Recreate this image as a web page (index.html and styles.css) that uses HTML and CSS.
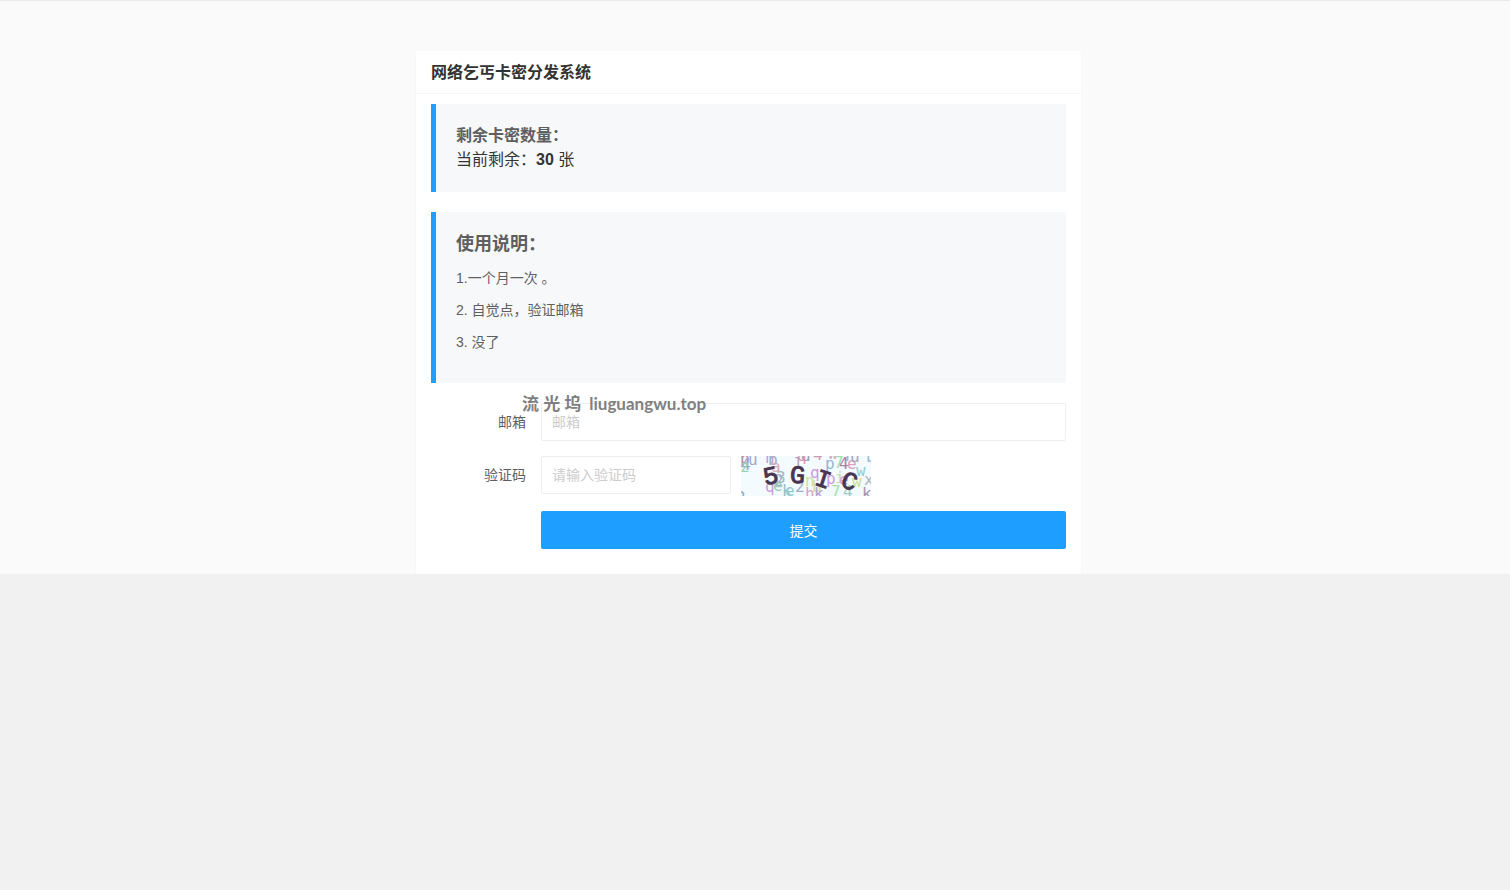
FILE: index.html
```
<!DOCTYPE html>
<html lang="zh-CN">
<head>
    <meta charset="UTF-8">
    <meta name="viewport" content="width=device-width, initial-scale=1.0">
    <title>网络乞丐卡密分发系统</title>
    <link rel="stylesheet" href="styles.css">
</head>
<body>
    <div class="page">
        <div class="card">
            <h1 class="card-header">网络乞丐卡密分发系统</h1>
            <div class="card-body">
                <!-- 剩余数量 -->
                <div class="quote">
                    <h2 class="quote-label">剩余卡密数量：</h2>
                    <div class="count">当前剩余：<b>30</b> 张</div>
                </div>

                <!-- 使用说明 -->
                <div class="quote">
                    <h2 class="quote-title">使用说明：</h2>
                    <p>1.一个月一次 。</p>
                    <p>2. 自觉点，验证邮箱</p>
                    <p>3. 没了</p>
                </div>

                <form class="form">
                    <div class="watermark"><span>流 光 坞</span><span>liuguangwu.top</span></div>
                    <div class="form-item">
                        <label class="form-label" for="email">邮箱</label>
                        <input class="input" type="text" id="email" name="email" placeholder="邮箱">
                    </div>
                    <div class="form-item">
                        <label class="form-label" for="captcha">验证码</label>
                        <input class="input input-captcha" type="text" id="captcha" name="captcha" placeholder="请输入验证码">
                        <svg class="captcha" width="130" height="40" viewBox="0 0 130 40" role="img" aria-label="验证码">
                            <rect width="130" height="40" fill="#f3fbfe"/>
                            <g class="noise">
                                <text x="-1" y="8" fill="#a792a8">p</text>
                                <text x="0" y="14" fill="#9ba6c7">4</text>
                                <text x="7" y="9" fill="#a3a9c9">u</text>
                                <text x="-1" y="16" fill="#93d5ae">z</text>
                                <text x="24" y="7" fill="#c69bdc">h</text>
                                <text x="27" y="9" fill="#a3a9c9">b</text>
                                <text x="30" y="16" fill="#dda3b8">a</text>
                                <text x="33" y="30" fill="#a1aec6">2</text>
                                <text x="35" y="27" fill="#9db7be">3</text>
                                <text x="24" y="36" fill="#cb9be1">q</text>
                                <text x="32" y="35" fill="#a0cdb2">e</text>
                                <text x="41" y="40" fill="#9bbccb">k</text>
                                <text x="44" y="40" fill="#91ccc5">e</text>
                                <text x="54" y="36" fill="#a0afc8">2</text>
                                <text x="53" y="13" fill="#b9a0c3">l</text>
                                <text x="56" y="5" fill="#d99aae">q</text>
                                <text x="60" y="5" fill="#a598b0">d</text>
                                <text x="72" y="4" fill="#d29aaf">4</text>
                                <text x="87" y="3" fill="#d5a6c6">w</text>
                                <text x="84" y="13" fill="#9bb3d5">p</text>
                                <text x="93" y="12" fill="#9ee0b6">7</text>
                                <text x="98" y="13" fill="#aa839c">4</text>
                                <text x="106" y="13" fill="#dba0bc">e</text>
                                <text x="103" y="5" fill="#c79ae0">r</text>
                                <text x="109" y="6" fill="#a7a3c2">u</text>
                                <text x="125" y="6" fill="#9dbbd0">b</text>
                                <text x="69" y="22" fill="#cb9be1">q</text>
                                <text x="85" y="28" fill="#cb9be1">p</text>
                                <text x="64" y="30" fill="#cdde9f">n</text>
                                <text x="71" y="36" fill="#d2dda1">b</text>
                                <text x="94" y="27" fill="#c2dca0">i</text>
                                <text x="98" y="29" fill="#d6a4ce">e</text>
                                <text x="115" y="20" fill="#96cbd3">w</text>
                                <text x="111" y="31" fill="#cedd98">w</text>
                                <text x="123" y="29" fill="#a8b7c3">x</text>
                                <text x="64" y="43" fill="#dca4c3">h</text>
                                <text x="73" y="43" fill="#b7a0cd">k</text>
                                <text x="90" y="41" fill="#a6e1af">7</text>
                                <text x="102" y="41" fill="#99cfc4">4</text>
                                <text x="121" y="43" fill="#a794a6">k</text>
                                <text x="-5" y="47" fill="#98acc0">2</text>
                            </g>
                            <g class="code">
                                <text x="22" y="28" transform="rotate(-12 29 19)">5</text>
                                <text x="49" y="27" transform="rotate(4 56 18)">G</text>
                                <text x="75" y="31" transform="rotate(18 82 23)">I</text>
                                <text x="101" y="33" transform="rotate(22 108 25)">C</text>
                            </g>
                        </svg>
                    </div>
                    <button class="btn" type="submit">提交</button>
                </form>
            </div>
        </div>
    </div>
</body>
</html>
```
FILE: styles.css
```
* {
    box-sizing: border-box;
}
body {
    margin: 0;
    background-color: #f1f1f1;
    color: #333;
    font-family: "Liberation Sans", "Noto Sans CJK SC", sans-serif;
    font-size: 14px;
    line-height: 24px;
}
h1, h2, p {
    margin: 0;
}
.page {
    padding: 50px 13px 0 0;
    border-top: 1px solid #eaeaea;
    background-color: #fafafa;
}
.card {
    max-width: 665px;
    margin: 0 auto;
    border-radius: 2px;
    background-color: #fff;
    box-shadow: 0 1px 2px 0 rgba(0, 0, 0, 0.05);
}
.card-header {
    height: 43px;
    padding: 0 15px;
    border-bottom: 1px solid #f6f6f6;
    font-size: 16px;
    line-height: 44px;
}
.card-body {
    padding: 10px 15px 25px;
}
.quote {
    margin-bottom: 20px;
    padding: 20px;
    border-left: 5px solid #1e9fff;
    background-color: #f7f8fa;
    color: #5f5f5f;
}
.quote-label {
    font-size: 16px;
    line-height: 24px;
}
.count {
    color: #333;
    font-size: 16px;
}
.quote-title {
    font-size: 18px;
    line-height: 25px;
}
.quote p {
    margin: 10px 0;
    line-height: 22px;
}
.form {
    position: relative;
}
.form-item {
    display: flex;
    height: 38px;
    margin-bottom: 15px;
}
.form-label {
    flex: none;
    width: 110px;
    padding-right: 15px;
    color: #5f5f5f;
    line-height: 38px;
    text-align: right;
}
.input {
    flex: 1;
    min-width: 0;
    height: 38px;
    padding: 0 10px;
    border: 1px solid #eee;
    border-radius: 2px;
    background-color: #fff;
    font-family: inherit;
    font-size: 14px;
}
.input::placeholder {
    color: #ccc;
}
.input-captcha {
    flex: 0 1 190px;
}
.captcha {
    flex: none;
    height: 40px;
    margin-left: 10px;
}
.noise {
    font-family: "DejaVu Sans Mono", monospace;
    font-size: 16px;
}
.code {
    fill: #4a3550;
    stroke: #4a3550;
    font-family: "Liberation Mono", monospace;
    font-size: 25px;
}
.btn {
    display: block;
    width: calc(100% - 110px);
    height: 38px;
    margin: 17px 0 0 110px;
    border: none;
    border-radius: 2px;
    background-color: #1e9fff;
    color: #fff;
    font-family: inherit;
    font-size: 14px;
    cursor: pointer;
}
.watermark {
    display: flex;
    gap: 8px;
    position: absolute;
    top: -11px;
    left: 91px;
    color: #808080;
    font-family: Lato, "Noto Sans CJK SC", sans-serif;
    font-size: 17px;
    font-weight: bold;
    white-space: nowrap;
    pointer-events: none;
}
```
